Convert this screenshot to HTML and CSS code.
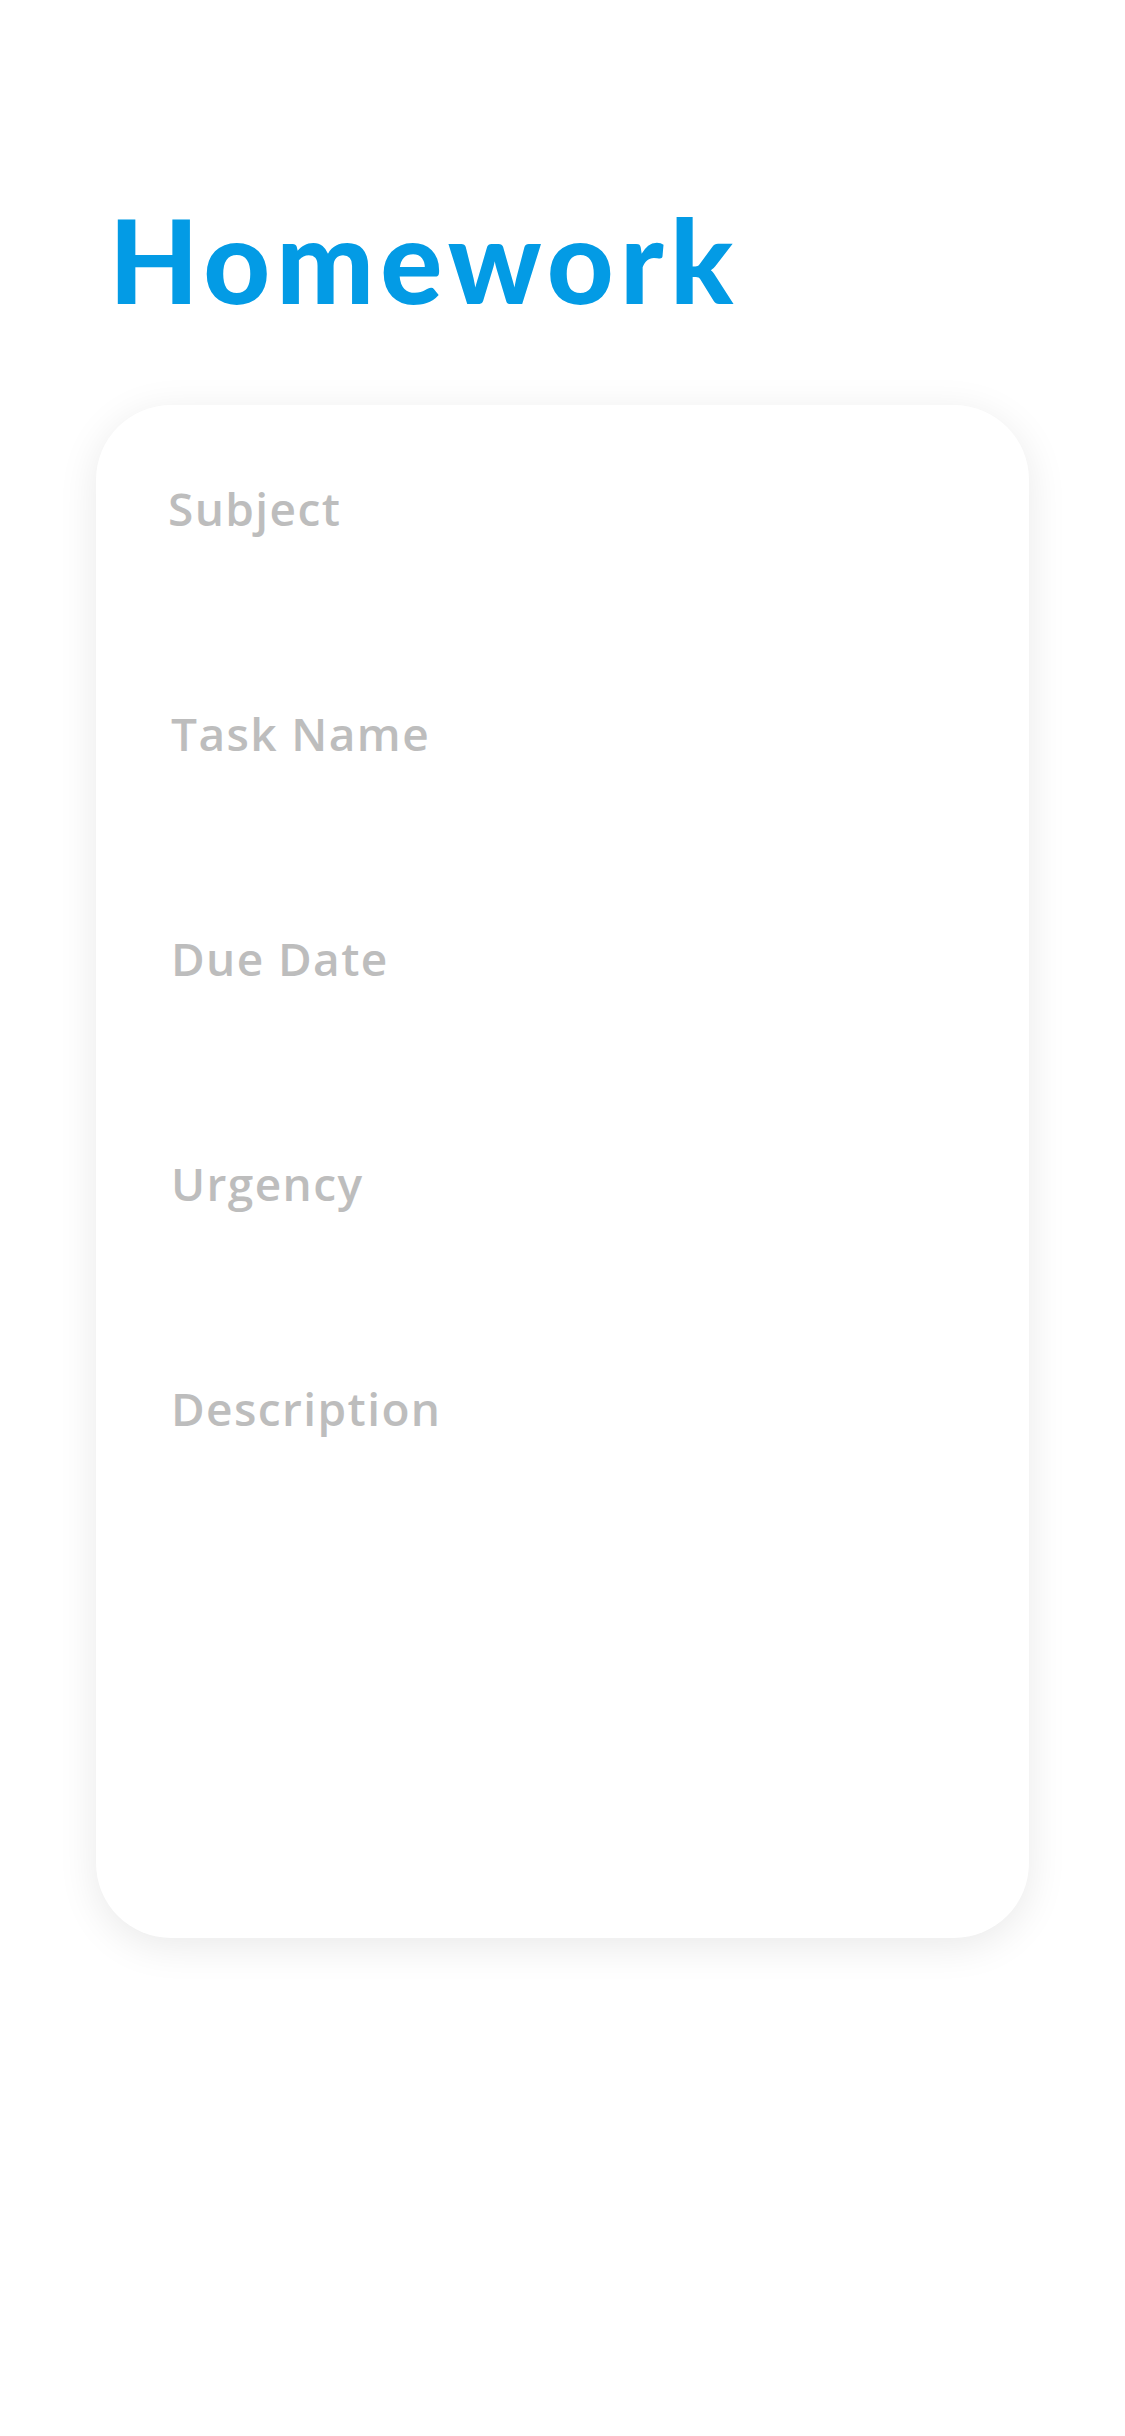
FILE: index.html
```html
<!DOCTYPE html>
<html lang="en">
<head>
<meta charset="utf-8">
<title>Homework</title>
<link rel="stylesheet" href="styles.css">
</head>
<body>
<main class="screen">
  <h1 class="title">Homework</h1>
  <form class="card">
    <div class="field"><label class="field-label field-label-first">Subject</label></div>
    <div class="field"><label class="field-label">Task Name</label></div>
    <div class="field"><label class="field-label">Due Date</label></div>
    <div class="field"><label class="field-label">Urgency</label></div>
    <div class="field field-desc"><label class="field-label">Description</label></div>
  </form>
</main>
</body>
</html>
```

FILE: styles.css
```css
* { box-sizing: border-box; }
html, body {
  margin: 0;
  padding: 0;
  background: #ffffff;
}
.screen {
  width: 1125px;
  min-height: 2436px;
  padding: 202px 96px 0 96px;
  display: flex;
  flex-direction: column;
}
.title {
  margin: 0 0 0 13px;
  font-family: Lato, "Liberation Sans", sans-serif;
  font-weight: 900;
  font-size: 116px;
  line-height: 1;
  color: #039be5;
  letter-spacing: 6.2px;
}
.card {
  margin-top: 87px;
  width: 933px;
  height: 1533px;
  background: #ffffff;
  border-radius: 75px;
  box-shadow: 0 8px 40px rgba(0, 0, 0, 0.09);
  padding: 80px 0 0 75px;
  display: flex;
  flex-direction: column;
}
.field {
  height: 225px;
}
.field-desc {
  flex: 1;
}
.field-label {
  display: block;
  font-family: "Open Sans", "Liberation Sans", sans-serif;
  font-weight: 600;
  font-size: 46px;
  line-height: 1;
  letter-spacing: 1.4px;
  color: #bdbdbd;
}
.field-label-first {
  margin-left: -3px;
}
```
